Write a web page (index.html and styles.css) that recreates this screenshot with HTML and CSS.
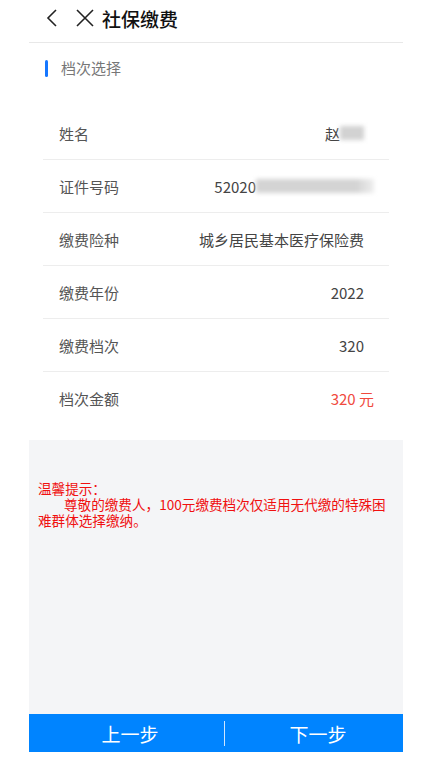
FILE: index.html
```html
<!DOCTYPE html>
<html lang="zh-CN">
<head>
    <meta charset="UTF-8">
    <title>社保缴费</title>
    <link rel="stylesheet" href="styles.css">
</head>
<body>
    <div class="page">
        <div class="header">
            <svg class="icon back" width="14" height="20" viewBox="0 0 14 20">
                <path d="M11 2 L3 10 L11 18" fill="none" stroke="#222" stroke-width="1.6"/>
            </svg>
            <svg class="icon close" width="18" height="18" viewBox="0 0 18 18">
                <path d="M1 1 L17 17 M17 1 L1 17" fill="none" stroke="#222" stroke-width="1.6"/>
            </svg>
            <span class="title">社保缴费</span>
        </div>

        <div class="section-title">
            <span class="bar"></span>
            <span>档次选择</span>
        </div>

        <div class="rows">
            <div class="row">
                <span class="label">姓名</span>
                <span class="value">赵<span class="mask mask-name"></span></span>
            </div>
            <div class="row">
                <span class="label">证件号码</span>
                <span class="value value-wide">52020<span class="mask mask-id"></span></span>
            </div>
            <div class="row">
                <span class="label">缴费险种</span>
                <span class="value">城乡居民基本医疗保险费</span>
            </div>
            <div class="row">
                <span class="label">缴费年份</span>
                <span class="value">2022</span>
            </div>
            <div class="row">
                <span class="label">缴费档次</span>
                <span class="value">320</span>
            </div>
            <div class="row">
                <span class="label">档次金额</span>
                <span class="value value-wide money">320 元</span>
            </div>
        </div>

        <div class="notice">
            <p class="notice-text">温馨提示：<br><span class="indent">尊敬的缴费人，100元缴费档次仅适用无代缴的特殊困难群体选择缴纳。</span></p>
        </div>

        <div class="footer">
            <span class="btn btn-prev">上一步</span>
            <span class="sep"></span>
            <span class="btn btn-next">下一步</span>
        </div>
    </div>
</body>
</html>
```

FILE: styles.css
```css
body {
    margin: 0;
    background: #fff;
    font-family: "Noto Sans CJK SC", "Noto Sans", sans-serif;
}

.page {
    width: 374px;
    margin-left: 29px;
}

.header {
    height: 43px;
    box-sizing: border-box;
    display: flex;
    align-items: center;
    padding: 0 0 6px 16px;
    border-bottom: 1px solid #e8e8e8;
}

.icon {
    display: block;
}

.back {
    margin-right: 17px;
}

.close {
    margin-right: 8px;
}

.title {
    font-size: 19px;
    color: #111;
    font-weight: 500;
}

.section-title {
    height: 51px;
    display: flex;
    align-items: center;
    padding-left: 16px;
    font-size: 15px;
    color: #777;
    margin-bottom: 13px;
}

.section-title span:last-child {
    margin-top: -2px;
}

.bar {
    width: 3px;
    height: 17px;
    border-radius: 2px;
    background: #1677ff;
    margin-right: 13px;
}

.rows {
    margin: 0 14px 15px;
}

.row {
    height: 53px;
    box-sizing: border-box;
    display: flex;
    align-items: center;
    justify-content: space-between;
    border-bottom: 1px solid #ededed;
    font-size: 15px;
    color: #555;
}

.row:last-child {
    border-bottom: none;
}

.label {
    padding-left: 16px;
}

.value {
    display: flex;
    align-items: center;
    padding-right: 25px;
    color: #444;
}

.value-wide {
    padding-right: 15px;
}

.money {
    color: #f04a3e;
}

.mask {
    display: block;
    height: 14px;
    filter: blur(2px);
}

.mask-name {
    width: 24px;
    background: #d2d2d2;
}

.mask-id {
    width: 118px;
    background: linear-gradient(to right, #d4d4d4 85%, #eeeeee);
}

.notice {
    height: 274px;
    background: #f4f5f7;
    padding: 40px 4px 0 9px;
    box-sizing: border-box;
}

.notice-text {
    margin: 0;
    font-size: 13.6px;
    line-height: 16px;
    color: #f01010;
}

.indent {
    padding-left: 26px;
}

.footer {
    height: 38px;
    background: #0084ff;
    display: flex;
    align-items: center;
}

.btn {
    text-align: center;
    color: #fff;
    font-size: 19px;
}

.btn-prev {
    width: 195px;
    box-sizing: border-box;
    padding-left: 7px;
}

.btn-next {
    flex: 1;
    padding-left: 8px;
}

.sep {
    width: 1px;
    height: 25px;
    background: #cfe6ff;
}
```
